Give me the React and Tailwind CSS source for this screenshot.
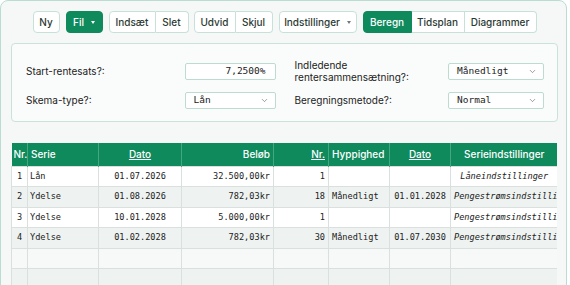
import React from 'react';
import { ChevronDown } from 'lucide-react';

const rows = [
  { nr: 1, serie: 'Lån', dato: '01.07.2026', belob: '32.500,00kr', antal: '1', hyp: '', slut: '', info: 'Låneindstillinger' },
  { nr: 2, serie: 'Ydelse', dato: '01.08.2026', belob: '782,03kr', antal: '18', hyp: 'Månedligt', slut: '01.01.2028', info: 'Pengestrømsindstillinger' },
  { nr: 3, serie: 'Ydelse', dato: '10.01.2028', belob: '5.000,00kr', antal: '1', hyp: '', slut: '', info: 'Pengestrømsindstillinger' },
  { nr: 4, serie: 'Ydelse', dato: '01.02.2028', belob: '782,03kr', antal: '30', hyp: 'Månedligt', slut: '01.07.2030', info: 'Pengestrømsindstillinger' },
  null,
  null,
];

const btn = 'h-[22px] flex items-center justify-center text-[10px] font-medium text-[#2b3a34] bg-white border border-[#c6e2d8]';
const greenBtn = 'h-[22px] flex items-center justify-center text-[10px] font-medium text-white bg-[#0e8a5d] border border-[#0e8a5d]';

const Caret = ({ color }) => (
  <span className={`inline-block w-0 h-0 border-l-[2.5px] border-r-[2.5px] border-t-[3px] border-l-transparent border-r-transparent ${color}`} />
);

const Select = ({ value }) => (
  <div className="h-[17px] flex items-center justify-between pl-[8px] pr-[6px] bg-white border border-[#bcdcd0] rounded-[2px]">
    <span className="text-[9.5px] text-[#222] font-['DejaVu_Sans_Mono',monospace]">{value}</span>
    <ChevronDown size={9} strokeWidth={1.5} className="text-[#555]" />
  </div>
);

export default function App() {
  return (
    <div className="w-[570px] h-[285px] overflow-hidden bg-white font-['Inter',sans-serif]">
      <div className="w-[567px] h-[300px] border border-[#b9ddd1] rounded-lg bg-[#f5f8f7] pl-[10px] pr-[8px] pt-[10px]">

        {/* Toolbar */}
        <div className="flex justify-center">
          <button className={`${btn} w-[27px] rounded-[4px]`}>Ny</button>
          <button className={`${greenBtn} ml-[6px] w-[37px] gap-[7px] rounded-[4px]`}>
            Fil <Caret color="border-t-white" />
          </button>
          <div className="flex ml-[6px]">
            <button className={`${btn} w-[47px] rounded-l-[4px]`}>Indsæt</button>
            <button className={`${btn} w-[33px] border-l-0 rounded-r-[4px]`}>Slet</button>
          </div>
          <div className="flex ml-[5px]">
            <button className={`${btn} w-[42px] rounded-l-[4px]`}>Udvid</button>
            <button className={`${btn} w-[37px] border-l-0 rounded-r-[4px]`}>Skjul</button>
          </div>
          <button className={`${btn} ml-[6px] w-[78px] gap-[7px] rounded-[4px]`}>
            Indstillinger <Caret color="border-t-[#777]" />
          </button>
          <div className="flex ml-[6px]">
            <button className={`${greenBtn} w-[49px] rounded-l-[4px]`}>Beregn</button>
            <button className={`${btn} w-[53px] border-l-0`}>Tidsplan</button>
            <button className={`${btn} w-[72px] border-l-0 rounded-r-[4px]`}>Diagrammer</button>
          </div>
        </div>

        {/* Settings panel */}
        <div className="mt-[10px] w-[547px] bg-[#fafcfb] border border-[#c9e3da] rounded-[4px] pl-[14px] pr-[13px] pt-[15px] pb-[12px] grid grid-cols-2 gap-x-[19px] gap-y-[9px] text-[10px] text-[#222]">
          <div className="flex items-center justify-between">
            <span>Start-rentesats?:</span>
            <div className="w-[91px] h-[17px] flex items-center justify-end pr-[9px] bg-white border border-[#bcdcd0] rounded-[2px] font-['DejaVu_Sans_Mono',monospace] text-[9.5px]">
              7,2500%
            </div>
          </div>
          <div className="flex items-center justify-between">
            <span className="leading-[12px]">Indledende<br />rentersammensætning?:</span>
            <div className="w-[96px]"><Select value="Månedligt" /></div>
          </div>
          <div className="flex items-center justify-between">
            <span>Skema-type?:</span>
            <div className="w-[91px]"><Select value="Lån" /></div>
          </div>
          <div className="flex items-center justify-between">
            <span>Beregningsmetode?:</span>
            <div className="w-[96px]"><Select value="Normal" /></div>
          </div>
        </div>

        {/* Table */}
        <div className="mt-[21px] w-[546px] overflow-hidden">
          <table className="w-[546px] table-fixed border-collapse">
            <colgroup>
              <col className="w-[16px]" />
              <col className="w-[71px]" />
              <col className="w-[83px]" />
              <col className="w-[92px]" />
              <col className="w-[55px]" />
              <col className="w-[61px]" />
              <col className="w-[61px]" />
              <col className="w-[107px]" />
            </colgroup>
            <thead>
              <tr className="h-[23px] bg-[#0e8a5d] text-white text-[10px]">
                <th className="px-[2px] text-left font-medium border-r border-[#47a682]">Nr.</th>
                <th className="px-[3px] text-left font-medium border-r border-[#47a682]">Serie</th>
                <th className="px-[3px] text-center font-medium underline border-r border-[#47a682]">Dato</th>
                <th className="px-[3px] text-right font-medium border-r border-[#47a682]">Beløb</th>
                <th className="px-[3px] text-right font-medium underline border-r border-[#47a682]">Nr.</th>
                <th className="px-[3px] text-left font-medium border-r border-[#47a682]">Hyppighed</th>
                <th className="px-[3px] text-center font-medium underline border-r border-[#47a682]">Dato</th>
                <th className="px-[3px] text-center font-medium">Serieindstillinger</th>
              </tr>
            </thead>
            <tbody className="font-['DejaVu_Sans_Mono',monospace] text-[8.6px] text-[#222]">
              {rows.map((r, i) => (
                <tr key={i} className={`h-[20.5px] ${i % 2 === 0 ? (r ? 'bg-white' : 'bg-[#f7f9f8]') : 'bg-[#eef3f1]'}`}>
                  <td className="border border-[#d9e0dd] text-center">{r?.nr}</td>
                  <td className="border border-[#d9e0dd] px-[2px] text-left whitespace-nowrap overflow-hidden">{r?.serie}</td>
                  <td className="border border-[#d9e0dd] px-[3px] text-center">{r?.dato}</td>
                  <td className="border border-[#d9e0dd] px-[3px] text-right">{r?.belob}</td>
                  <td className="border border-[#d9e0dd] px-[3px] text-right">{r?.antal}</td>
                  <td className="border border-[#d9e0dd] px-[3px] text-left whitespace-nowrap">{r?.hyp}</td>
                  <td className="border border-[#d9e0dd] px-[3px] text-center">{r?.slut}</td>
                  <td className="border border-[#d9e0dd] border-r-0 px-[3px] text-center italic whitespace-nowrap overflow-hidden">{r?.info}</td>
                </tr>
              ))}
            </tbody>
          </table>
        </div>

      </div>
    </div>
  );
}
